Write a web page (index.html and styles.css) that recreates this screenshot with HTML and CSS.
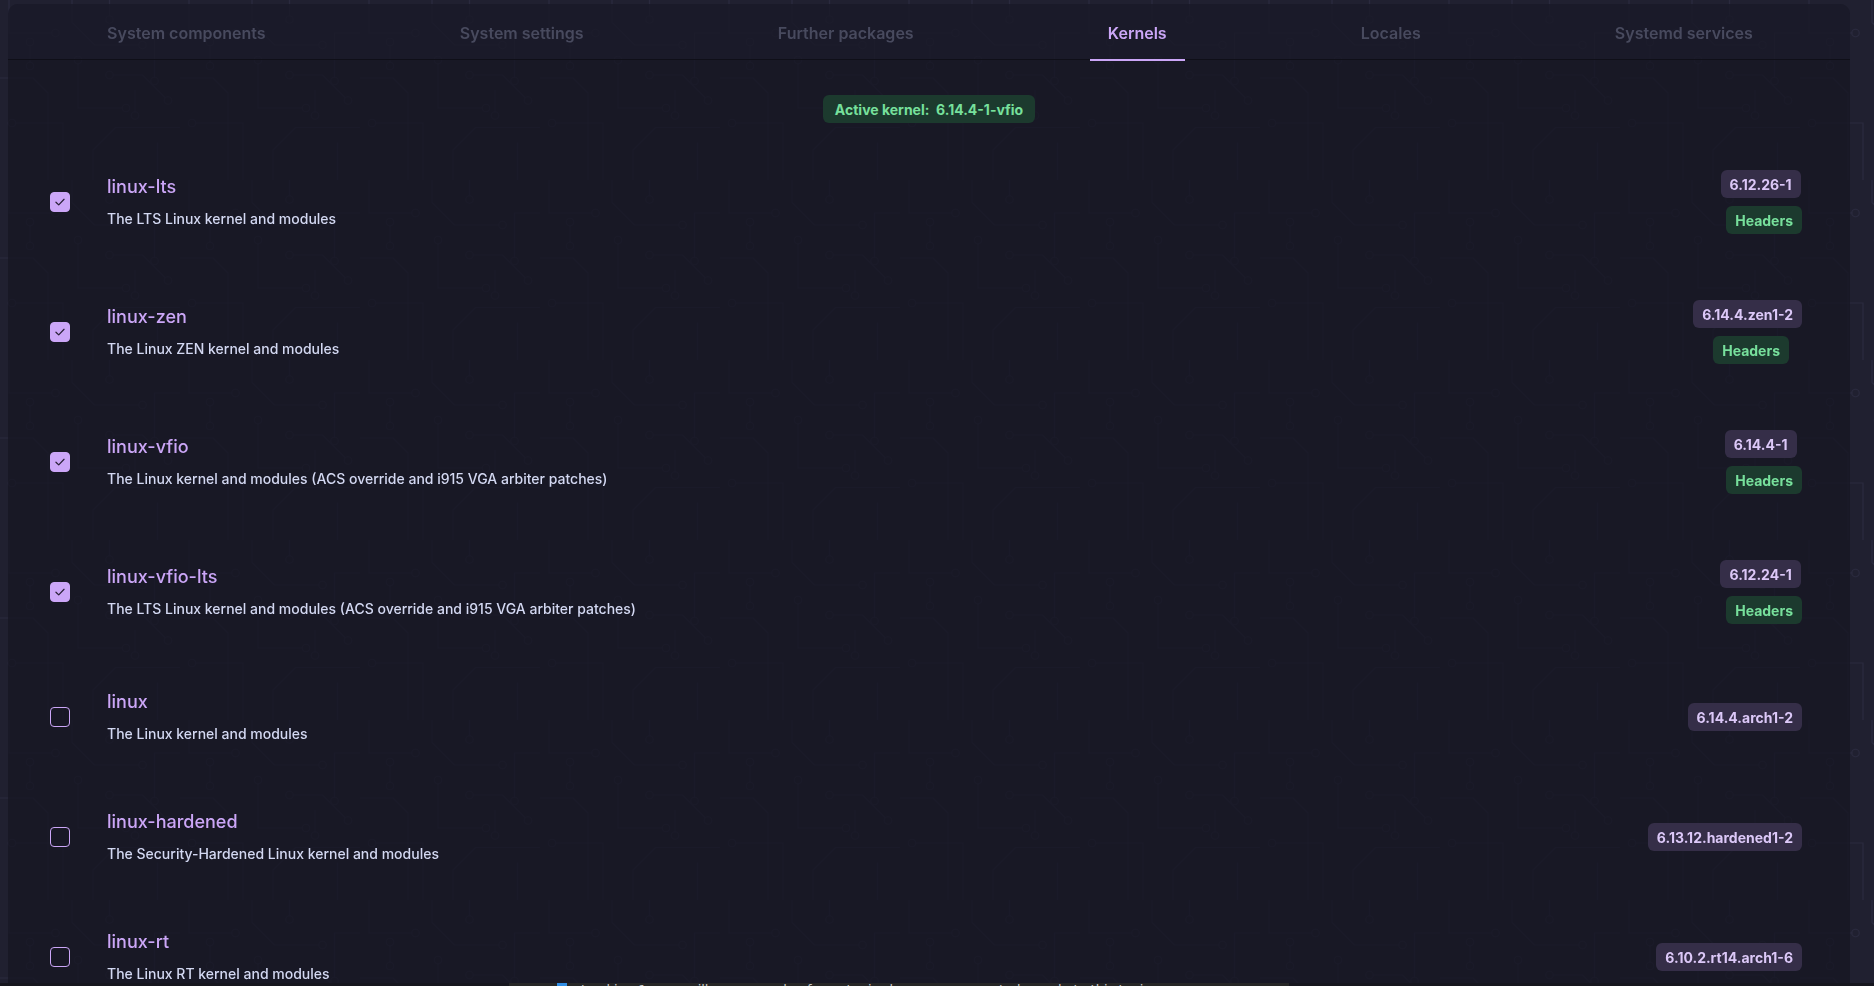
FILE: index.html
```html
<!DOCTYPE html>
<html lang="en">
<head>
<meta charset="utf-8">
<title>Kernels</title>
<link rel="stylesheet" href="styles.css">
</head>
<body>
<svg class="bg-pattern" aria-hidden="true">
  <defs>
    <pattern id="circuit" width="240" height="240" patternUnits="userSpaceOnUse" patternTransform="scale(0.75)">
      <g fill="none" stroke="#2a2a3e" stroke-width="1.6">
        <path d="M12 0 V44 H70 M96 0 V30 L126 60 H186 M0 104 H44 L64 124 V240 M104 84 V144 H164 M146 0 V22 M240 44 H206 V104 M20 164 H84 V240 M124 240 V200 L154 170 H240 M180 120 V150 M210 190 V240 M40 60 V84 M150 100 L190 100 L220 130"/>
        <circle cx="74" cy="44" r="5"/>
        <circle cx="190" cy="60" r="5"/>
        <circle cx="104" cy="80" r="5"/>
        <circle cx="168" cy="144" r="5"/>
        <circle cx="146" cy="26" r="5"/>
        <circle cx="206" cy="108" r="5"/>
        <circle cx="16" cy="164" r="5"/>
        <circle cx="180" cy="154" r="5"/>
        <circle cx="40" cy="56" r="5"/>
        <circle cx="40" cy="88" r="5"/>
        <circle cx="146" cy="100" r="5"/>
        <circle cx="224" cy="134" r="5"/>
      </g>
    </pattern>
  </defs>
  <rect width="100%" height="100%" fill="url(#circuit)"/>
</svg>

<div class="app">
  <div class="panel">
    <nav class="tabs">
      <div class="tab">System components</div>
      <div class="tab">System settings</div>
      <div class="tab">Further packages</div>
      <div class="tab active">Kernels</div>
      <div class="tab">Locales</div>
      <div class="tab">Systemd services</div>
    </nav>

    <div class="content">
      <div class="active-wrap">
        <span class="badge green active-kernel">Active kernel:&nbsp; 6.14.4-1-vfio</span>
      </div>

      <ul class="list">
        <li class="row">
          <span class="check on"><svg viewBox="0 0 20 20"><path d="M5.5 10.2 L8.6 13.2 L14.5 7"/></svg></span>
          <div class="info"><div class="name">linux-lts</div><div class="desc">The LTS Linux kernel and modules</div></div>
          <div class="badges"><span class="badge ver">6.12.26-1</span><span class="badge green hdr">Headers</span></div>
        </li>
        <li class="row">
          <span class="check on"><svg viewBox="0 0 20 20"><path d="M5.5 10.2 L8.6 13.2 L14.5 7"/></svg></span>
          <div class="info"><div class="name">linux-zen</div><div class="desc">The Linux ZEN kernel and modules</div></div>
          <div class="badges"><span class="badge ver">6.14.4.zen1-2</span><span class="badge green hdr">Headers</span></div>
        </li>
        <li class="row">
          <span class="check on"><svg viewBox="0 0 20 20"><path d="M5.5 10.2 L8.6 13.2 L14.5 7"/></svg></span>
          <div class="info"><div class="name">linux-vfio</div><div class="desc">The Linux kernel and modules (ACS override and i915 VGA arbiter patches)</div></div>
          <div class="badges"><span class="badge ver">6.14.4-1</span><span class="badge green hdr">Headers</span></div>
        </li>
        <li class="row">
          <span class="check on"><svg viewBox="0 0 20 20"><path d="M5.5 10.2 L8.6 13.2 L14.5 7"/></svg></span>
          <div class="info"><div class="name">linux-vfio-lts</div><div class="desc">The LTS Linux kernel and modules (ACS override and i915 VGA arbiter patches)</div></div>
          <div class="badges"><span class="badge ver">6.12.24-1</span><span class="badge green hdr">Headers</span></div>
        </li>
        <li class="row">
          <span class="check"></span>
          <div class="info"><div class="name">linux</div><div class="desc">The Linux kernel and modules</div></div>
          <div class="badges"><span class="badge ver">6.14.4.arch1-2</span></div>
        </li>
        <li class="row">
          <span class="check"></span>
          <div class="info"><div class="name">linux-hardened</div><div class="desc">The Security-Hardened Linux kernel and modules</div></div>
          <div class="badges"><span class="badge ver">6.13.12.hardened1-2</span></div>
        </li>
        <li class="row">
          <span class="check"></span>
          <div class="info"><div class="name">linux-rt</div><div class="desc">The Linux RT kernel and modules</div></div>
          <div class="badges"><span class="badge ver">6.10.2.rt14.arch1-6</span></div>
        </li>
      </ul>
    </div>
  </div>
</div>

<div class="bottom-strip">
  <div class="toast"><span class="toast-dot"></span><span class="toast-text">tracking 1 &nbsp; you will see a couple of new topics because you posted a reply to this topic</span></div>
</div>
</body>
</html>
```

FILE: styles.css
```css
* {
  box-sizing: border-box;
}

html, body {
  margin: 0;
  padding: 0;
  height: 100%;
}

body {
  background: #202030;
  font-family: Inter, "Noto Sans", "DejaVu Sans", sans-serif;
  overflow: hidden;
  color: #cdd6f4;
}

.bg-pattern {
  position: fixed;
  inset: 0;
  width: 100%;
  height: 100%;
  z-index: 0;
}

.app {
  position: relative;
  z-index: 1;
  padding: 4px 24px 0 8px;
}

.panel {
  background: rgba(22, 22, 34, 0.74);
  border-radius: 10px 10px 0 0;
}

.tabs {
  display: flex;
  justify-content: space-around;
  height: 56px;
  background: rgba(32, 32, 48, 0.35);
  border-bottom: 1px solid #0f0f18;
  border-radius: 10px 10px 0 0;
  padding-left: 2px;
}

.tab {
  position: relative;
  display: flex;
  align-items: center;
  padding: 2px 18px 0;
  font-size: 16px;
  font-weight: 600;
  color: #484a5e;
  white-space: nowrap;
}

.tab.active {
  color: #cba6f7;
}

.tab.active::after {
  content: "";
  position: absolute;
  left: 0;
  right: 0;
  bottom: -2px;
  height: 2px;
  background: #cba6f7;
}

.content {
  padding-top: 35px;
}

.active-wrap {
  display: flex;
  justify-content: center;
}

.badge {
  display: inline-flex;
  align-items: center;
  height: 28px;
  padding: 0 9px;
  border-radius: 6px;
  font-size: 14px;
  font-weight: 700;
  white-space: nowrap;
}

.badge.green {
  background: #1c3a2e;
  color: #77e09c;
}

.badge.ver {
  background: #352e48;
  color: #dcc8f8;
}

.active-kernel {
  padding: 0 12px;
}

.list {
  list-style: none;
  margin: 14px 0 0;
  padding: 0;
}

.row {
  display: flex;
  align-items: center;
  gap: 37px;
  padding: 33px 48px 33px 42px;
}

.check {
  flex: none;
  width: 20px;
  height: 20px;
  border-radius: 4px;
  border: 1.5px solid #cba6f7;
  display: flex;
  align-items: center;
  justify-content: center;
}

.check.on {
  background: #cba6f7;
}

.check svg {
  width: 20px;
  height: 20px;
}

.check svg path {
  fill: none;
  stroke: #2a2238;
  stroke-width: 1.4;
  stroke-linecap: round;
  stroke-linejoin: round;
}

.info {
  flex: 1;
  display: flex;
  flex-direction: column;
  gap: 10px;
}

.name {
  font-size: 18px;
  line-height: 24px;
  font-weight: 500;
  color: #cba6f7;
}

.desc {
  font-size: 14px;
  line-height: 20px;
  font-weight: 500;
  color: #d3d8f2;
}

.badges {
  display: flex;
  flex-direction: column;
  align-items: center;
  gap: 8px;
}

.badge.hdr {
  margin-left: 7px;
}

.bottom-strip {
  position: fixed;
  left: 0;
  right: 0;
  bottom: 0;
  height: 3px;
  z-index: 2;
  background: #16161e;
  overflow: hidden;
  padding-left: 509px;
}

.toast {
  display: flex;
  align-items: flex-start;
  gap: 14px;
  width: 780px;
  height: 3px;
  background: #262626;
  padding-left: 48px;
  overflow: hidden;
}

.toast-dot {
  width: 10px;
  height: 3px;
  background: #2f8de4;
  flex: none;
}

.toast-text {
  font-family: "DejaVu Sans", sans-serif;
  font-size: 13px;
  line-height: 14px;
  color: #c8c8c8;
  white-space: nowrap;
}
```
